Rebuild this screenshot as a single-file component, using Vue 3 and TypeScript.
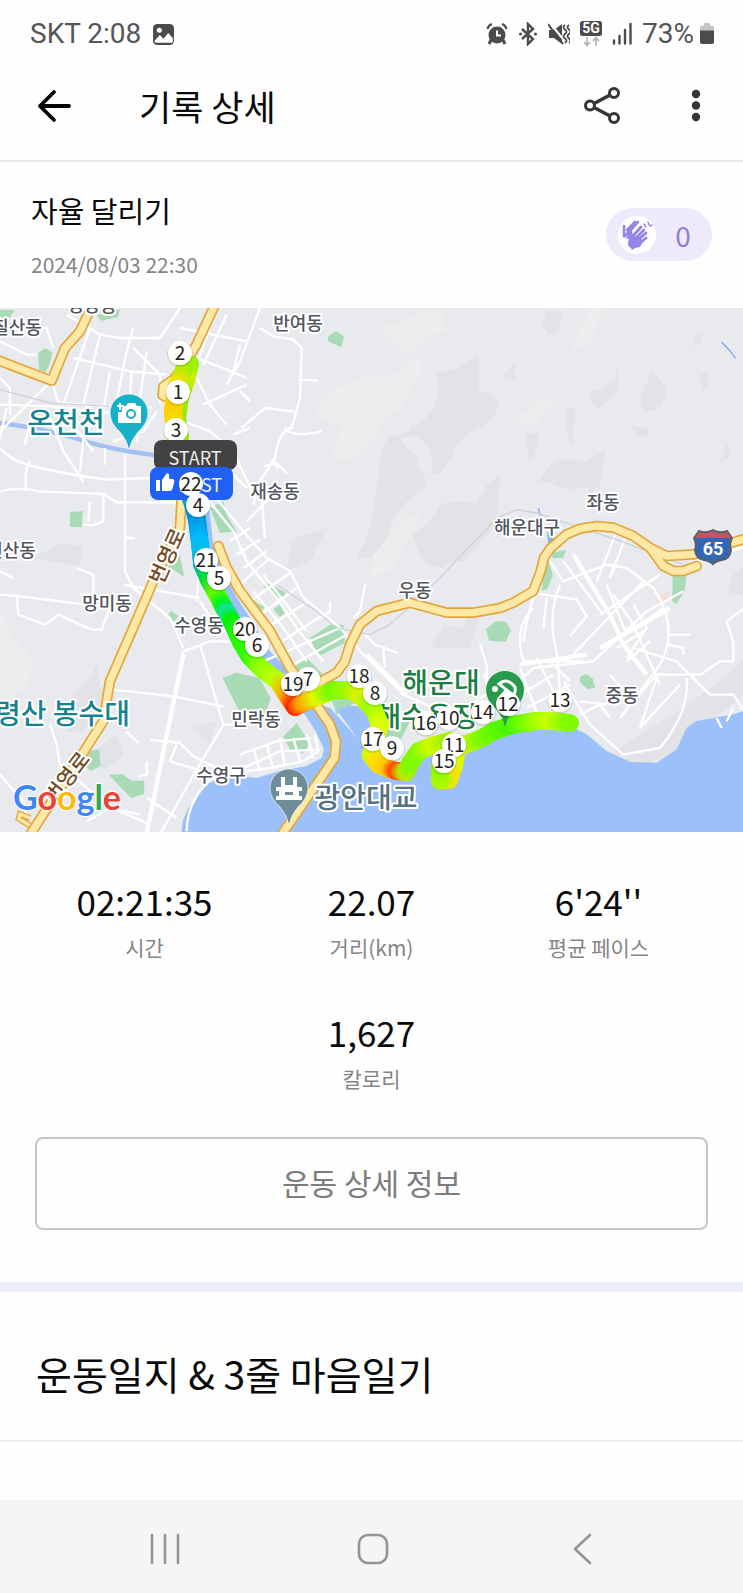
<script setup lang="ts">
import { computed, ref } from 'vue'

interface TrackPoint { x: number; y: number; c: [number, number, number] }
interface MapLabel { text: string; x: number; y: number; kind: string; anchor?: string; rotate?: number }
interface Marker { km: number; x: number; y: number }

const cheers = ref(0)

const stats = [
  { value: '02:21:35', label: '시간' },
  { value: '22.07', label: '거리(km)' },
  { value: "6'24''", label: '평균 페이스' },
  { value: '1,627', label: '칼로리' },
]

const labels: MapLabel[] = [
  { text: '칠산동', x: 17, y: 26, kind: 'area' },
  { text: '명장동', x: 92, y: 4, kind: 'area' },
  { text: '반여동', x: 298, y: 22, kind: 'area' },
  { text: '재송동', x: 275, y: 190, kind: 'area' },
  { text: '연산동', x: 11, y: 249, kind: 'area' },
  { text: '망미동', x: 107, y: 302, kind: 'area' },
  { text: '수영동', x: 199, y: 324, kind: 'area' },
  { text: '민락동', x: 256, y: 418, kind: 'area' },
  { text: '수영구', x: 221, y: 474, kind: 'area' },
  { text: '우동', x: 415, y: 289, kind: 'area' },
  { text: '좌동', x: 603, y: 201, kind: 'area' },
  { text: '해운대구', x: 527, y: 226, kind: 'area' },
  { text: '중동', x: 622, y: 394, kind: 'area' },
  { text: '번영로', x: 174, y: 251, kind: 'road', rotate: -66 },
  { text: '번영로', x: 73, y: 474, kind: 'road', rotate: -52 },
  { text: '온천천', x: 66, y: 125, kind: 'water' },
  { text: '황령산 봉수대', x: 130, y: 416, kind: 'water', anchor: 'end' },
  { text: '해운대', x: 441, y: 385, kind: 'beach' },
  { text: '해수욕장', x: 427, y: 419, kind: 'beach' },
  { text: '광안대교', x: 366, y: 500, kind: 'bridge' },
]

const earlyMarkers: Marker[] = [
  { km: 2, x: 180, y: 45 },
  { km: 1, x: 178, y: 84 },
  { km: 3, x: 176, y: 122 },
]

const lateMarkers: Marker[] = [
  { km: 22, x: 191, y: 176 },
  { km: 4, x: 198, y: 197 },
  { km: 21, x: 206, y: 252 },
  { km: 5, x: 219, y: 270 },
  { km: 20, x: 245, y: 321 },
  { km: 6, x: 257, y: 337 },
  { km: 18, x: 359, y: 368 },
  { km: 7, x: 308, y: 371 },
  { km: 19, x: 293, y: 376 },
  { km: 8, x: 375, y: 385 },
  { km: 13, x: 560, y: 392 },
  { km: 12, x: 508, y: 396 },
  { km: 14, x: 483, y: 404 },
  { km: 10, x: 449, y: 410 },
  { km: 16, x: 426, y: 415 },
  { km: 17, x: 373, y: 431 },
  { km: 11, x: 454, y: 437 },
  { km: 9, x: 392, y: 440 },
  { km: 15, x: 444, y: 453 },
]

const tracks: TrackPoint[][] = [
  [
    { x: 190, y: 56, c: [140, 240, 0] },
    { x: 186, y: 72, c: [200, 240, 0] },
    { x: 180, y: 90, c: [170, 235, 0] },
    { x: 177, y: 110, c: [150, 235, 0] },
    { x: 180, y: 130, c: [150, 240, 0] },
  ],
  [
    { x: 184, y: 62, c: [150, 240, 0] },
    { x: 176, y: 80, c: [250, 225, 0] },
    { x: 173, y: 103, c: [255, 205, 0] },
    { x: 175, y: 126, c: [240, 230, 0] },
    { x: 186, y: 178, c: [90, 200, 240] },
    { x: 193, y: 196, c: [0, 160, 225] },
    { x: 197, y: 212, c: [0, 145, 225] },
    { x: 200, y: 236, c: [0, 190, 250] },
    { x: 202, y: 256, c: [10, 185, 215] },
    { x: 209, y: 272, c: [0, 220, 60] },
    { x: 218, y: 288, c: [110, 250, 0] },
    { x: 224, y: 300, c: [0, 245, 30] },
    { x: 228, y: 306, c: [20, 225, 160] },
    { x: 232, y: 314, c: [0, 240, 10] },
    { x: 241, y: 334, c: [40, 250, 0] },
    { x: 250, y: 349, c: [50, 250, 10] },
    { x: 262, y: 361, c: [140, 255, 0] },
    { x: 278, y: 373, c: [190, 255, 0] },
    { x: 288, y: 389, c: [255, 170, 0] },
    { x: 295, y: 399, c: [255, 40, 0] },
    { x: 303, y: 395, c: [255, 150, 0] },
    { x: 319, y: 388, c: [225, 250, 0] },
    { x: 334, y: 382, c: [120, 250, 0] },
    { x: 350, y: 382, c: [160, 250, 0] },
    { x: 362, y: 389, c: [220, 240, 0] },
    { x: 374, y: 402, c: [150, 255, 0] },
    { x: 380, y: 416, c: [210, 255, 0] },
    { x: 376, y: 432, c: [230, 245, 0] },
    { x: 371, y: 447, c: [210, 250, 0] },
    { x: 378, y: 456, c: [250, 225, 0] },
    { x: 389, y: 461, c: [255, 200, 0] },
    { x: 397, y: 463, c: [255, 70, 0] },
    { x: 406, y: 464, c: [190, 230, 0] },
    { x: 411, y: 454, c: [130, 250, 0] },
    { x: 419, y: 443, c: [130, 250, 0] },
    { x: 434, y: 437, c: [210, 250, 0] },
    { x: 450, y: 433, c: [160, 240, 0] },
    { x: 464, y: 437, c: [225, 240, 0] },
    { x: 480, y: 431, c: [140, 250, 0] },
    { x: 494, y: 423, c: [100, 250, 0] },
    { x: 512, y: 417, c: [70, 245, 0] },
    { x: 535, y: 413, c: [150, 255, 0] },
    { x: 552, y: 413, c: [200, 255, 0] },
    { x: 570, y: 415, c: [130, 250, 0] },
  ],
  [
    { x: 457, y: 440, c: [225, 240, 0] },
    { x: 454, y: 458, c: [220, 250, 0] },
    { x: 449, y: 472, c: [250, 225, 0] },
    { x: 440, y: 472, c: [180, 245, 0] },
    { x: 440, y: 458, c: [140, 250, 0] },
  ],
]

const trackDots = computed(() => {
  const dots: { x: number; y: number; fill: string }[] = []
  for (const track of tracks) {
    for (let i = 0; i < track.length - 1; i++) {
      const a = track[i]
      const b = track[i + 1]
      const steps = Math.max(2, Math.round(Math.hypot(b.x - a.x, b.y - a.y) / 2))
      for (let s = 0; s <= steps; s++) {
        const t = s / steps
        const mix = (p: number, q: number) => Math.round(p + (q - p) * t)
        dots.push({
          x: a.x + (b.x - a.x) * t,
          y: a.y + (b.y - a.y) * t,
          fill: `rgb(${mix(a.c[0], b.c[0])}, ${mix(a.c[1], b.c[1])}, ${mix(a.c[2], b.c[2])})`,
        })
      }
    }
  }
  return dots
})

const ramp = 'M110 1565L56 1532 60 1518 90 1530'

const highways = [
  'M545 570L540 659 460 819 400 959 330 1119 310 1239 240 1349 90 1580',
  'M645 -10L590 109 540 190 520 215 490 235 488 262 505 270',
  'M-5 157L60 182 155 218 195 120 240 70 268 10',
  'M655 714L680 779 720 849 810 969 870 1079 955 1199 990 1250 1008 1300 1004 1349 970 1399 845 1580',
  'M920 1144L1010 1094 1034 1062 1050 1010 1080 949 1130 909 1230 884 1340 914 1420 914 1500 900 1540 884 1600 849 1622 790 1632 749 1650 722 1700 679 1740 662 1790 654 1840 659 1900 684 1950 719 2000 744 2080 739 2229 694',
  'M1950 719L1990 774 2020 789 2050 789 2090 774',
]
</script>

<template>
  <main class="screen">
    <div class="status-bar">
      <div class="status-left">
        <span>SKT 2:08</span>
        <svg class="ico-photo" viewBox="0 0 22 22" aria-hidden="true">
          <rect x="1" y="1" width="20" height="20" rx="4" fill="#4b4b4d" />
          <circle cx="7" cy="7" r="2.4" fill="#fff" />
          <path d="M2.5 17l5-5.500 3.500 3.500 4.500-5.500 4.500 5v3q0 1.500-1.500 1.500h-14.500q-1.500 0-1.500-2z" fill="#fff" />
        </svg>
      </div>
      <div class="status-right">
        <svg class="ico" viewBox="0 0 22 24" aria-hidden="true">
          <circle cx="11" cy="13" r="8.500" fill="#4b4b4d" />
          <path d="M1.500 7q1-4 4.500-5M20.500 7q-1-4-4.500-5" stroke="#4b4b4d" stroke-width="2.200" fill="none" />
          <path d="M5 18l-2 4M17 18l2 4" stroke="#4b4b4d" stroke-width="3" />
          <path d="M11 8.500v5h4" stroke="#fff" stroke-width="2" fill="none" />
        </svg>
        <svg class="ico" viewBox="0 0 22 24" aria-hidden="true">
          <path d="M5 7l11 10-5 5V2l5 5L5 17" stroke="#4b4b4d" stroke-width="2.400" fill="none" />
          <circle cx="3.500" cy="12" r="1.500" fill="#4b4b4d" /><circle cx="18.500" cy="12" r="1.500" fill="#4b4b4d" />
        </svg>
        <svg class="ico" viewBox="0 0 22 24" aria-hidden="true">
          <path d="M1 8h5l8-6v20l-8-6H1z" fill="#4b4b4d" />
          <path d="M2 1l17 21" stroke="#fff" stroke-width="2" />
          <path d="M0 2l15 20" stroke="#4b4b4d" stroke-width="2" />
          <path d="M17 3q-3 2.300 0 4.500t0 4.500q-3 2.300 0 4.500t0 4.500M21 3q-3 2.300 0 4.500t0 4.500q-3 2.300 0 4.500t0 4.500" stroke="#4b4b4d" stroke-width="1.800" fill="none" />
        </svg>
        <svg class="ico-5g" viewBox="0 0 24 28" aria-hidden="true">
          <rect x="1" y="1" width="22" height="15" rx="2.500" fill="#4b4b4d" />
          <text x="12" y="13" text-anchor="middle" class="net-text">5G</text>
          <path d="M8 17v8M5 22l3 3.500 3-3.500M17 26v-8M14 21l3-3.500 3 3.500" stroke="#b5b5b5" stroke-width="1.700" fill="none" />
        </svg>
        <svg class="ico" viewBox="0 0 22 24" aria-hidden="true">
          <path d="M3 18.500v3M8.500 14v7.500M14 8v13.500M19.500 2v19.500" stroke="#4b4b4d" stroke-width="2.400" stroke-linecap="round" />
        </svg>
        <span class="percent">73%</span>
        <svg class="ico-battery" viewBox="0 0 16 24" aria-hidden="true">
          <path d="M5 1h6v2.500h2q2 0 2 2V9H1V5.500q0-2 2-2h2z" fill="#c6c6c6" />
          <path d="M1 8.500h14V20q0 2-2 2H3q-2 0-2-2z" fill="#4b4b4d" />
        </svg>
      </div>
    </div>

    <header class="app-bar">
      <button class="icon-btn back" type="button" aria-label="뒤로">
        <svg viewBox="0 0 36 36"><path d="M33 18H4M18 4L4 18l14 14" fill="none" stroke="#050505" stroke-width="3.800" stroke-linecap="round" stroke-linejoin="round" /></svg>
      </button>
      <h1>기록 상세</h1>
      <button class="icon-btn share" type="button" aria-label="공유">
        <svg viewBox="0 0 40 40"><g fill="none" stroke="#353535" stroke-width="3"><path d="M12 17L27 9M12 22L27 30" stroke-width="3.600" /><circle cx="7" cy="19.500" r="4.500" /><circle cx="31" cy="7" r="4.500" /><circle cx="31" cy="32" r="4.500" /></g></svg>
      </button>
      <button class="icon-btn more" type="button" aria-label="더보기">
        <svg viewBox="0 0 40 40"><g fill="#353535"><circle cx="20" cy="8" r="4.200" /><circle cx="20" cy="19.500" r="4.200" /><circle cx="20" cy="31" r="4.200" /></g></svg>
      </button>
    </header>

    <section class="summary">
      <div>
        <h2>자율 달리기</h2>
        <p>2024/08/03 22:30</p>
      </div>
      <button class="cheer" type="button" aria-label="응원하기" @click="cheers++">
        <span class="cheer-icon">
          <svg viewBox="0 0 38 38">
            <g fill="none" stroke="#9684e6" stroke-linecap="round">
              <path d="M6 20V10M9 14l8-8M12 15l8-9M7 20l6-7" stroke-width="2.600" />
              <path d="M13 21v-5M15 20l8-9M18 22l8-8M20 24l8-7M22 27l6-5" stroke-width="2.800" />
              <path d="M26 8l2 3M30 6l1 3M34 9l-2 1" stroke-width="1.400" />
            </g>
            <path d="M4 20l4 3 2-6 3-1v8q-3-2-7-2zM12 17l3 4 5-2 5 6-3 6-5 1-3 2-1-2q-3-1-3-5z" fill="#9684e6" />
          </svg>
        </span>
        <span class="cheer-count">{{ cheers }}</span>
      </button>
    </section>

    <svg class="map" viewBox="0 0 743 524" role="img" aria-label="달리기 경로 지도">
      <rect width="743" height="524" fill="#e8eaed" />
      <g transform="scale(0.33333)">
        <g fill="#ebeeec">
          <path d="M1140 60q90-20 120-50l60-5 20 60-60 20-60 60zM1110 200q60 20 140-50 20-10 16 40l-60 110q-60 30-80 90l-60 60q-60 30-70-20l30-70q-60-20-80-40 20-70 90-90z" />
          <path d="M1710 130l60-130 40 0-40 110zM1540 340l90-70 30 10-50 70zM0 900l40 90 60 60-20 90-80 40zM1120 740l90-110 60-20-90 170-70 30z" />
        </g>
        <g fill="#e1e3e7">
          <path d="M1370 180l65-40 3 110q40 0 60 30-10 60-60 80-60 20-80 80l-40 60q-30 0-20-40-10-60-60-80l-36 10q20 40 50 50-10 30 20 60l10 30-60 50q-50 40-60 110l-50 60h-40q40-80 50-150l15-100q0-80 30-110l60-20q10-40 30-20l40-40q30-70 10-110z" />
          <path d="M1640 10l45 0-10 60-30 10-20-30zM1770 250q40-10 70-30l12-45 5 65q-30 40-60 60-30-10-27-50zM1925 260l30-70q40 30 44 70l-20 40q-30 20-58 0zM1700 310q10-20 25-10l-8 110q-20-20-17-100zM1620 520q30-60 60-66l80 6 58-35-18 110q-20 0-26 30l-14-30q-60 20-110-10zM1580 380l40-10-20 80-15 15zM1505 205l40-40v55zM2080 90l20-15 5 25-20 20zM2100 200l20-5 10 35-25 20zM1890 350l55 15-6 22-30-6zM2170 440l10-35 15 40-40 20z" />
          <path d="M580 1260l70-20-20 70zM220 1150q40-10 70-80l20 100-60 100-50 0zM100 750l80-45 70 10-10 60zM1240 680q60-40 80-90 60-20 110 0l30-60 40-30-10 150-100 110q-40-10-60 20l-50-10q-30-40-40-90zM2190 860q-10-60 39-80v80zM2000 1230q100-60 229-170v100q-80 80-140 80l-60 90-70 30q-80 20-150-10zM880 690l100-30-50 100-70 30z" />
          <path d="M1290 1020l40-70 60 10 20-60 30 20-30 100zM280 1330l70-50 20 60-60 50z" />
        </g>
        <g fill="#a8dab5">
          <path d="M0 6h45l-18 24-27 4zM115 135l20-14 22 12-8 35-12 25-20-8zM210 612l38-2-2 48-36-2zM290 20l70-16-6 24-50 10zM983 87l25-18 24 17-8 32-40-18zM630 600l40-20 10 40 30 50-50 5zM500 780l40-40 12 66-30-20z" />
          <path d="M502 922l12-14 20 16-10 18zM668 1110l40-16 70 16 34 60-20 60-70-12zM250 1370l15-40 32-6 5 50-30 15zM327 1400l40-2 28 20 38 0-1 40-38 12-30-30z" />
          <path d="M790 835l17-10 50 30-5 15-20-3zM820 904l22-15 18 20-20 18zM745 870l50 28-25 24-24-10zM930 990l60-40 40 0 5 55-80 40zM860 1090l62-38 60 60-70 40zM850 1285l40-40 40 60-20 30-40-10zM990 1160l100-30-20 50-60 40zM1160 1250l70-10-30 60-40-10z" />
          <path d="M1458 963l30-24 30 2 15 26-16 34-50-3zM1740 1107l18-10 20 15 8 28-24 3-22-20zM2018 800l45-20-10 70-24 38-12-10zM1625 850l15-110 18 60-14 40zM1650 735l48-10-8 24-30 2z" />
        </g>
        <path d="M1968 870l35-18 4 16-32 28z" fill="#f8dcd6" />
        <path d="M1640 670l28 30 0 20-20 4z" fill="#7cb4e8" />
        <path d="M2165 103l22 22 20 26M1615 600l8 28" stroke="#7da9f5" stroke-width="4" fill="none" />
        <path d="M0 345Q150 365 240 395T470 442" fill="none" stroke="#a4c0f5" stroke-width="13" />
        <path d="M545 1572L548 1539 565 1500 600 1449 625 1425 700 1400 770 1410 840 1389 920 1374 965 1350 972 1325 950 1275 915 1220 880 1195 820 1120 750 1050 700 960 650 850 600 710 580 560 625 580 640 710 705 860 750 930 800 1020 870 1089 920 1180 990 1199 1090 1310 1105 1360 1220 1400 1240 1330 1360 1289 1490 1259 1620 1255 1720 1259 1760 1279 1820 1329 1890 1362 1970 1364 2030 1324 2060 1259 2090 1239 2200 1219 2229 1210V1572Z" fill="#9cc0fa" />
        <path d="M1010 1205l40-12 60 2 60 50-10 60-70 10z" fill="#9cc0fa" />

        <g fill="none" stroke="#fff" stroke-width="7" stroke-linejoin="round">
          <!-- northwest grid -->
          <path d="M155 218L0 370M155 218l20 65 100 10 180 5M0 210l30 30 0 80M0 100l80 40 30 0M80 60l60 0 20 60M200 20l100 60 60 10 120 0 60-90M220 150l170 40 110 10M270 60l-80 230M300 80l-50 210M400 60l-20 70-30 150M400 120l80 80 0 90M395 190l-5 70M440 130l-25 180M330 190l-20 120M0 290l150 5 180 20 120 10" />
          <path d="M0 420q30 40 120 60t200 35l130-5M20 300l-20 90M90 340l-15 70M150 330l40 100 60 90M180 300l100 130M250 390l-10 100M315 420l0 50M430 290l-20 110M375 440v350L400 840M340 400l90-30 40-60M80 550q-10-60 10-90M0 550q60-15 120 0l190 8 40 25h190M310 558v80q-30 20-60 10M270 580l-5 60M375 690h30" />
          <path d="M540 60l200 40M650 0l-60 170-40 90M680 20l-70 150M590 150l80 30 70 30M590 210l40 80 50 60M700 190l20-80M610 290l130-60M500 320l130 50 70 60 60 130M560 440l140 60 40 40M700 380l50-20" />
          <path d="M780 0l-60 160-40 70M780 60l40 25 60 10 25 25-5 150-25 90q-40 10-50 90l-45 70-20 70M895 215l60 3M880 310l-85-10-70 60M855 360q20 30 110 10M790 475l40-10 30 30M815 455l20 25M720 250l30 30M780 510l15 180M740 640l40-40 30-30" />
          <!-- riverside district -->
          <path d="M620 570L700 670 740 760 830 870 890 960 970 1060M640 560L730 670 800 750 870 789 910 869 1020 959 1080 1029 1210 1159 1320 1209M540 590l60 70M760 850l90 110 70 100M790 800l70 90 60 80M720 830l90-80M750 880l120-85M780 920l110-80M800 960l125-80M830 1010l140-90M790 1060l230-100M860 1080l180-100M690 700l60-40M710 740l70-45M730 780l70-50" />
          <path d="M400 840l110 90 40 90M600 880l40 60 60 50M370 830l230 40M590 880l10-140M550 1030l-110 550M550 1030l80-30 60 0 60 60M600 1010l70 240-100 170-90 160M670 1250l70 0M340 1145l180 20 150 30M450 1295l90 10 40 40 80 40M530 1310l-20 50 100 30M440 1360v40l-25 5" />
          <path d="M560 1570q0-100 90-170l160-20 100-20 45-30-10-50M720 1340l110-40 100 -10M730 1380l110-50 120-5M760 1320l20 70M800 1310l20 75M840 1290l15 85M880 1290l20 70M920 1280l20 70" />
          <!-- southwest -->
          <path d="M0 860l60 5 240 30M50 860l5 60 80 30 40-30 100 45h30l30-80M230 780l50 20v60l-40 0M0 790l40 20M150 1250l20 60 10 60 80 70 100 70 90 40M380 1270l35 35M0 1400l70 80 20 90M440 1470l90 60M260 1540l70-40 90 20" />
          <!-- U-dong -->
          <path d="M1095 980l30 30 40 15 30 10M1150 1020l5 60M1060 930l20-20 15-80M960 930l30-20v-30M1440 1010l20 60 0 60M1390 1200l120-70M1220 1220l180 20M1450 1100l40 60" />
          <!-- Haeundae new town -->
          <path d="M1690 760l120 160M1680 830q-40 100-10 200l10 120M1600 900q-60 60-30 160h180M1650 760l40 60 130-50 60 10 80 60q80 120 20 230l-120 160M1850 670l-60 150M1880 680l-50 130M1500 1170l100-90 180-20 160-150 110-60M1800 920l180-120M1700 1060l230-240M1840 860l60 90 80 180M1600 855l130 20 30 50-50 60M1900 890l40 70-60 90M1640 870l-10 90" />
          <path d="M1600 870q-20 60-30 130M1820 830l60 150M1910 960l80-60M1850 1020l80-50M1880 1060l70-60M2000 980h70M2000 1010l50 10v20M1900 1020l130 40 60 60 40 40 70 0 40 60M1830 1100l70 80 70-80 130 0 60-40 40 0 0-60-20-60 79-60M1970 1110l-50 150M2040 1130l-120 130M2060 1110q10 100-80 210l-110 20-100-90-80-130" />
          <path d="M1560 1080l60 160M1610 1050l60 120M1560 1160l100-60M1580 1200l130-70M1700 1120l-40 100M1650 1060l60 60M1740 1180l80 10M1740 1220l60-30 30 40M2150 1230l15 30M2180 1240l20-40" />
        </g>
        <g fill="none" stroke="#fff" stroke-width="13">
          <path d="M550 1040L440 1575M1720 740l110 180 40 90 70 90M1800 1020l210-120M2080 765l149-50M1560 1070l200-30M1100 1040l120 120" />
        </g>
        <g fill="none" stroke="#d0d2d5" stroke-width="4">
          <path d="M830 830l120 80 60 50 100 20 60-30 140-130 180-190 60-25 60 10 240 80 200 75" />
          <path d="M0 245l150 40 180 10" />
        </g>
        <path :d="ramp" fill="none" stroke="#e2a63c" stroke-width="18" />
        <path :d="ramp" fill="none" stroke="#fee8a6" stroke-width="10" />
        <g fill="none" stroke="#e2a63c" stroke-width="32" stroke-linejoin="round" stroke-linecap="round">
          <path v-for="(d, i) in highways" :key="i" :d="d" />
        </g>
        <g fill="none" stroke="#fee8a6" stroke-width="22" stroke-linejoin="round" stroke-linecap="round">
          <path v-for="(d, i) in highways" :key="i" :d="d" />
        </g>
      </g>

      <g>
        <text
          v-for="(l, i) in labels"
          :key="i"
          :x="l.x"
          :y="l.y"
          :class="['label', l.kind]"
          :text-anchor="l.anchor ?? 'middle'"
          :transform="l.rotate ? `rotate(${l.rotate} ${l.x} ${l.y})` : undefined"
        >{{ l.text }}</text>
      </g>

      <!-- route shield -->
      <path d="M699 223q7 3 14-1 7 4 14 1l5 7q-3 6-1 12-1 9-9 10-6 1-9 4-3-3-9-4-8-1-9-10 2-6-1-12z" fill="#3367b5" stroke="#5b5f66" stroke-width="2" />
      <path d="M699 224q7 3 14-1 7 4 14 1l4 6h-36z" fill="#c45560" />
      <text x="713" y="247" text-anchor="middle" class="shield">65</text>

      <!-- place pins -->
      <g stroke="#fff" stroke-opacity="0.6" stroke-width="1">
        <path d="M129 142q-2-10-9-18-10-9-10-19a19 19 0 0 1 38 0q0 10-10 19-7 8-9 18z" fill="#16b1c6" />
        <path d="M289 517q-2-10-9-18-10-9-10-19a19 19 0 0 1 38 0q0 10-10 19-7 8-9 18z" fill="#6f8c99" />
      </g>
      <path d="M122 98h4l2-3h7l2 3h4v17h-23v-11h4z" fill="#fff" />
      <circle cx="131" cy="106" r="5" fill="#16b1c6" /><circle cx="131" cy="106" r="3" fill="#fff" />
      <path d="M120 95v7M117 98h7" stroke="#fff" stroke-width="2" />
      <path d="M281 469h4v8h8v-8h4v10h5v4h-3v5h3v4h-26v-4h3v-5h-3v-4h5zM285 484v3h8v-3z" fill="#fff" fill-rule="evenodd" />

      <text x="13" y="502" class="google"><tspan fill="#4285f4">G</tspan><tspan fill="#ea4335">o</tspan><tspan fill="#fbbc05">o</tspan><tspan fill="#4285f4">g</tspan><tspan fill="#34a853">l</tspan><tspan fill="#ea4335">e</tspan></text>

      <circle v-for="(d, i) in trackDots" :key="i" :cx="d.x" :cy="d.y" r="9" :fill="d.fill" />

      <path d="M505 419q-2-10-9-18-10-9-10-19a19 19 0 0 1 38 0q0 10-10 19-7 8-9 18z" fill="#289a4c" />
      <circle cx="495" cy="381" r="3" fill="#fff" />
      <path d="M499 376q8-7 16 3 1 6-2 8zM507 381l-7 9" fill="none" stroke="#fff" stroke-width="3" />

      <g v-for="m in earlyMarkers" :key="m.km">
        <circle :cx="m.x" :cy="m.y + 1" r="13" fill="#000" opacity="0.1" />
        <circle :cx="m.x" :cy="m.y" r="12" fill="#fff" />
        <text :x="m.x" :y="m.y + 7" class="km">{{ m.km }}</text>
      </g>
      <rect x="154" y="132" width="83" height="30" rx="8" fill="#424242" />
      <text x="195" y="157" text-anchor="middle" class="flag">START</text>
      <rect x="150" y="159" width="83" height="33" rx="8" fill="#2160f6" />
      <path d="M156 172h4v11h-4zM162 172l5-7q3 0 2 6h4q2 1 1 4l-2 7q-1 1-3 1h-7z" fill="#fff" />
      <text x="222" y="184" text-anchor="end" class="flag">BEST</text>
      <g v-for="m in lateMarkers" :key="m.km">
        <circle :cx="m.x" :cy="m.y + 1" r="13" fill="#000" opacity="0.1" />
        <circle :cx="m.x" :cy="m.y" r="12" fill="#fff" />
        <text :x="m.x" :y="m.y + 7" class="km">{{ m.km }}</text>
      </g>
    </svg>

    <section class="stats-section">
      <dl class="stats">
        <div v-for="(s, i) in stats" :key="s.label" :class="['stat', { centered: i === 3 }]">
          <dd>{{ s.value }}</dd>
          <dt>{{ s.label }}</dt>
        </div>
      </dl>
      <button class="detail-btn" type="button">운동 상세 정보</button>
    </section>

    <section class="diary">
      <h2>운동일지 &amp; 3줄 마음일기</h2>
    </section>

    <nav class="nav-bar">
      <button type="button" aria-label="최근 앱">
        <svg viewBox="0 0 34 34"><path d="M4 3v28M17 3v28M30 3v28" stroke="#949496" stroke-width="2.600" stroke-linecap="round" /></svg>
      </button>
      <button type="button" aria-label="홈">
        <svg viewBox="0 0 34 34"><rect x="3" y="3" width="28" height="28" rx="9" fill="none" stroke="#949496" stroke-width="2.600" /></svg>
      </button>
      <button type="button" aria-label="뒤로 가기">
        <svg viewBox="0 0 34 34"><path d="M25 3L10 17l15 14" fill="none" stroke="#949496" stroke-width="2.600" stroke-linecap="round" stroke-linejoin="round" /></svg>
      </button>
    </nav>
  </main>
</template>

<style>
body {
  margin: 0;
  background: #fff;
}
</style>

<style scoped>
.screen {
  display: flex;
  flex-direction: column;
  min-height: 100vh;
  background: #fefefe;
  color: #0a0a0a;
  font-family: "Noto Sans CJK KR", "Noto Sans", sans-serif;
}
h1, h2, p, dl, dd, dt {
  margin: 0;
  font-weight: 400;
}
button {
  padding: 0;
  border: 0;
  background: none;
  font: inherit;
  cursor: pointer;
}
svg {
  display: block;
}
.status-bar {
  display: flex;
  justify-content: space-between;
  align-items: center;
  height: 68px;
  padding: 0 28px 0 30px;
  color: #555;
  font-family: Roboto, Inter, sans-serif;
  font-size: 28px;
  line-height: 32px;
}
.status-left, .status-right {
  display: flex;
  align-items: center;
}
.status-left {
  gap: 11px;
}
.ico-photo {
  width: 23px;
  height: 23px;
}
.ico {
  width: 22px;
  height: 24px;
  margin-right: 9px;
}
.ico-5g {
  width: 24px;
  height: 28px;
  margin-right: 8px;
}
.net-text {
  font: 700 14px Roboto, sans-serif;
  fill: #fff;
}
.percent {
  margin-right: 5px;
}
.ico-battery {
  width: 16px;
  height: 24px;
}
.app-bar {
  display: flex;
  align-items: center;
  height: 76px;
  padding: 0 27px 16px 36px;
  border-bottom: 2px solid #e9e9e9;
}
.app-bar h1 {
  flex: 1;
  margin-left: 67px;
  font-size: 35px;
  line-height: 48px;
}
.back svg {
  width: 36px;
  height: 36px;
}
.share svg, .more svg {
  width: 40px;
  height: 40px;
}
.share {
  margin-right: 53px;
}
.summary {
  display: flex;
  justify-content: space-between;
  align-items: center;
  padding: 28px 31px 29px;
}
.summary h2 {
  font-size: 29px;
  line-height: 40px;
}
.summary p {
  margin-top: 19px;
  color: #858585;
  font-size: 21px;
  line-height: 30px;
}
.cheer {
  display: flex;
  align-items: center;
  width: 106px;
  height: 53px;
  padding: 0 12px;
  box-sizing: border-box;
  border-radius: 27px;
  background: #eeeafb;
}
.cheer-icon {
  width: 38px;
  height: 38px;
  border-radius: 50%;
  background: #fff;
}
.cheer-count {
  flex: 1;
  padding-left: 10px;
  color: #8f80cf;
  font-size: 28px;
  line-height: 38px;
  text-align: center;
}
.map {
  width: 100%;
  height: auto;
}
.label {
  paint-order: stroke;
  stroke: #fff;
  stroke-width: 4px;
  stroke-linejoin: round;
  font-family: "Noto Sans CJK KR", sans-serif;
  font-weight: 500;
}
.area {
  fill: #50555c;
  font-size: 18px;
}
.road {
  fill: #714b27;
  font-size: 21px;
}
.water {
  fill: #17838f;
  font-size: 28px;
}
.beach {
  fill: #1b7f43;
  font-size: 28px;
}
.bridge {
  fill: #557080;
  font-size: 28px;
}
.shield {
  fill: #fff;
  font: 700 18px Roboto, sans-serif;
}
.google {
  paint-order: stroke;
  stroke: #fff;
  stroke-width: 2px;
  font: 700 34px Lato, sans-serif;
}
.km {
  fill: #222;
  font-size: 19px;
  text-anchor: middle;
}
.flag {
  fill: #eee;
  font-size: 18px;
}
.stats-section {
  padding: 45px 35px 52px;
  border-bottom: 10px solid #eceff7;
}
.stats {
  display: grid;
  grid-template-columns: repeat(3, 1fr);
  row-gap: 46px;
  margin: 0 -4px;
}
.stat {
  display: flex;
  flex-direction: column;
  align-items: center;
  gap: 7px;
}
.centered {
  grid-column: 2;
}
.stat dd {
  font-size: 35px;
  line-height: 48px;
}
.stat dt {
  color: #858585;
  font-size: 21px;
  line-height: 30px;
}
.detail-btn {
  width: 100%;
  height: 93px;
  margin-top: 44px;
  padding-bottom: 3px;
  border: 2px solid #c6c6c6;
  border-radius: 8px;
  color: #7c7c7c;
  font-size: 30px;
}
.diary {
  flex: 1;
}
.diary h2 {
  padding: 54px 36px 40px;
  border-bottom: 2px solid #f0f0f0;
  font-size: 39px;
  line-height: 54px;
}
.nav-bar {
  display: grid;
  grid-template-columns: repeat(3, 1fr);
  height: 93px;
  padding: 0 57px 0 61px;
  background: #f5f5f8;
}
.nav-bar button {
  display: grid;
  place-items: center;
  padding-top: 4px;
}
.nav-bar svg {
  width: 34px;
  height: 34px;
}
</style>
